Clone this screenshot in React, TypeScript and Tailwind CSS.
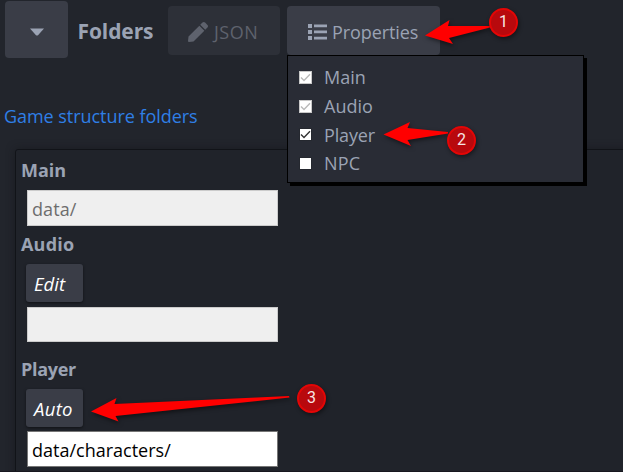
import type { ReactNode } from "react";

const properties = [
  { name: "Main", checked: true, disabled: true, spacing: "tracking-[0px]" },
  { name: "Audio", checked: true, disabled: true, spacing: "tracking-[0px]" },
  { name: "Player", checked: true, disabled: false, spacing: "tracking-[-0.15px]" },
  { name: "NPC", checked: false, disabled: false, spacing: "tracking-[0.2px]" },
];

function CheckBox({ checked, disabled }: { checked: boolean; disabled: boolean }) {
  return (
    <span className={`flex h-[13px] w-[13px] shrink-0 items-center justify-center border bg-white ${disabled ? "border-[#c8c8c8]" : "border-[#25282f]"}`}>
      {checked && (
        <svg viewBox="0 0 11 11" className="h-[11px] w-[11px]" fill="none" stroke={disabled ? "#b9b9b9" : "#333333"} strokeWidth="1.4">
          <path d="M1 5.4 4 8.4 10 2.2" />
        </svg>
      )}
    </span>
  );
}

function Marker({ n, className }: { n: number; className: string }) {
  return (
    <div className={`absolute flex h-[29px] w-[29px] items-center justify-center rounded-full border-2 border-[#e30606] bg-[#b8090d] pb-px font-['Roboto',sans-serif] text-[16px] text-[#f6e4e4] shadow-[1px_2px_4px_rgba(0,0,0,0.45)] ${className}`}>
      {n}
    </div>
  );
}

function SmallButton({ children }: { children: ReactNode }) {
  return (
    <button className="ml-[5px] block h-[38px] w-[57px] rounded-[3px] bg-[#3a3d47] pl-[8px] pt-px text-left text-[18.5px] italic text-white shadow-[0_1px_3px_rgba(0,0,0,0.5)]">
      {children}
    </button>
  );
}

export default function App() {
  return (
    <div className="relative h-[472px] w-[623px] overflow-hidden border-b border-[#17171f] bg-[#22252c] font-['Open_Sans','Noto_Sans',sans-serif] text-[18px] leading-[24px] text-[#9ba3b4]">
      <header className="flex h-[58px] items-start pl-[5px] pt-px">
        <button className="flex h-[57px] w-[63px] items-center justify-center rounded-[4px] bg-[#3a3d47]">
          <svg viewBox="0 0 14 8" className="mt-[4px] h-[8px] w-[14px]" fill="#9ba3b4">
            <path d="M0 .5h14L8 7.2q-1 .8-2 0z" />
          </svg>
        </button>
        <h1 className="ml-[9.500px] mt-[15px] w-[90.500px] text-[21px] font-bold leading-[30px] tracking-[-0.1px]">Folders</h1>
        <button className="mt-[5px] flex h-[49px] w-[112px] items-center rounded-[4px] bg-[#2d3038] pl-[20px] pt-[3px] text-[#5e626d]">
          <svg viewBox="0 0 512 512" className="mb-px h-[20px] w-[20px]" fill="currentColor">
            <path d="M290.74 93.24l128.02 128.02-277.99 277.99-114.14 12.6C11.35 513.54-1.56 500.62.14 485.34l12.7-114.22 277.9-277.88zm207.2-19.06l-60.11-60.11c-18.75-18.75-49.16-18.75-67.91 0l-56.55 56.55 128.02 128.02 56.55-56.55c18.75-18.76 18.75-49.16 0-67.91z" />
          </svg>
          <span className="ml-[6px] tracking-[0.5px]">JSON</span>
        </button>
        <button className="ml-[7px] mt-[5px] flex h-[49px] w-[153px] items-center rounded-[4px] bg-[#3a3d47] pl-[21px] pt-[3px]">
          <svg viewBox="0 0 19 16" className="h-[16px] w-[19px]" fill="currentColor">
            <path d="M0 0h4v4H0zM6 .5h13v2.700H6zM0 6h4v4H0zM6 6.600h13v2.700H6zM0 12h4v4H0zM6 12.700h13v2.700H6z" />
          </svg>
          <span className="ml-[5px] tracking-[-0.1px]">Properties</span>
        </button>
      </header>

      <p className="ml-[4px] mt-[46px] h-[45px] tracking-[-0.05px] text-[#2f7fe6]">Game structure folders</p>

      <main className="ml-[15px] h-[340px] w-[620px] rounded-[3px] border border-[#111318] bg-[#20232a] pl-[5px] pt-[8px] shadow-[0_0_8px_rgba(20,22,25,0.6)]">
        <section className="h-[74px]">
          <h2 className="font-bold tracking-[0px]">Main</h2>
          <input disabled value="data/" className="ml-[6px] mt-[8px] block h-[36px] w-[251px] border border-[#cbcbcb] bg-[#efefef] pb-px pl-[4px] pt-[3px] tracking-[0.1px] text-[#6d6d6d]" />
        </section>
        <section className="h-[125px]">
          <h2 className="mb-[8px] font-bold tracking-[0.2px]">Audio</h2>
          <SmallButton><span className="tracking-[0px]">Edit</span></SmallButton>
          <input disabled className="ml-[6px] mt-[5px] block h-[35px] w-[251px] border border-[#cbcbcb] bg-[#efefef]" />
        </section>
        <section>
          <h2 className="mb-[8px] font-bold tracking-[-0.3px]">Player</h2>
          <SmallButton><span className="tracking-[0.300px]">Auto</span></SmallButton>
          <input readOnly value="data/characters/" className="ml-[6px] mt-[4px] block h-[36px] w-[251px] border border-[#767676] bg-white pb-px pl-[4px] pt-[3px] text-black" />
        </section>
      </main>

      <div className="absolute left-[287px] top-[55px] h-[128px] w-[297px] border border-black bg-[#292c35] pl-[11px] pt-[7px] shadow-[3px_3px_0_#000]">
        {properties.map((p) => (
          <label key={p.name} className="flex h-[28.7px] items-center">
            <CheckBox checked={p.checked} disabled={p.disabled} />
            <span className={`ml-[12px] ${p.spacing}`}>{p.name}</span>
          </label>
        ))}
      </div>

      <svg viewBox="0 0 623 472" className="absolute inset-0 h-[472px] w-[623px] drop-shadow-[1px_2px_2px_rgba(0,0,0,0.5)]" fill="#ff0000">
        <path d="M425 35.5 449.500 20 448 26 490 26 490 27.500 449 38 453 44z" />
        <path d="M383.500 134.500 410 122 407.500 128 448 132 448 133.500 407.500 140 411 146z" />
        <path d="M91 411.500 116.500 398 114.500 404 289 396 289.500 397.500 115.500 416 118.500 421.500z" />
      </svg>
      <Marker n={1} className="left-[489px] top-[8px]" />
      <Marker n={2} className="left-[447px] top-[126px]" />
      <Marker n={3} className="left-[297px] top-[384px]" />
    </div>
  );
}
